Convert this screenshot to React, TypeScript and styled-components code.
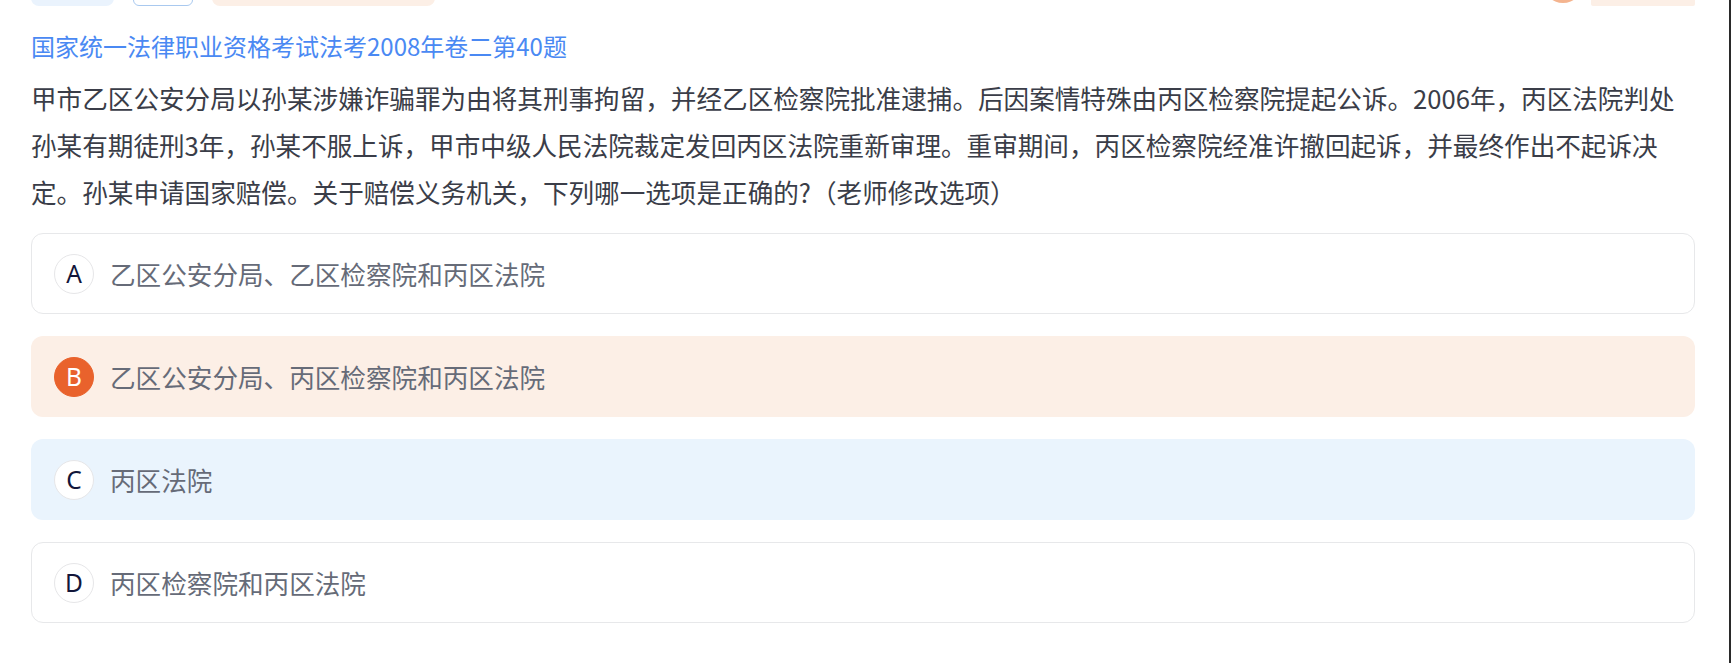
import React from "react";
import styled, { createGlobalStyle, css } from "styled-components";

const GlobalStyle = createGlobalStyle`
  html, body {
    margin: 0;
    padding: 0;
    background: #fff;
  }
  body {
    font-family: "Noto Sans CJK SC", "Noto Sans", "Liberation Sans", sans-serif;
    -webkit-font-smoothing: antialiased;
  }
`;

const Page = styled.div`
  display: flex;
  height: 663px;
  overflow: hidden;
`;

const Content = styled.div`
  flex: 1;
  min-width: 0;
  padding: 0 34px 0 31px;
`;

const WindowEdge = styled.div`
  width: 2px;
  background: #2a2a2a;
`;

/* the tag bar above is scrolled away, only its lower edge still shows */
const TagStrip = styled.div`
  display: flex;
  align-items: flex-end;
  height: 6px;
  overflow: hidden;
`;

const TagGroup = styled.div`
  display: flex;
  align-items: flex-end;
  gap: ${(p: { $gap: number }) => p.$gap}px;
`;

type TagKind = "blue" | "outline" | "peach" | "flat";

const tagStyles: Record<TagKind, ReturnType<typeof css>> = {
  blue: css`
    background: #eaf3fd;
    border-radius: 8px;
  `,
  outline: css`
    background: #fff;
    border: 1px solid #a9c9ef;
    border-radius: 6px;
  `,
  peach: css`
    background: #fcefe6;
    border-radius: 8px;
  `,
  flat: css`
    background: #fcefe6;
    border-radius: 2px;
  `,
};

const Tag = styled.div<{ $kind: TagKind; $width: number }>`
  box-sizing: border-box;
  height: 36px;
  width: ${(p) => p.$width}px;
  ${(p) => tagStyles[p.$kind]}
`;

const Avatar = styled.div`
  width: 40px;
  height: 40px;
  margin-bottom: 3px;
  border-radius: 50%;
  background: #f4b48f;
`;

const Spacer = styled.div`
  flex: 1;
`;

const Source = styled.div`
  margin: 22px 0 10px;
  font-size: 24px;
  line-height: 36px;
  color: #4a89f3;
`;

const Stem = styled.p`
  margin: 0;
  font-size: 25.6px;
  line-height: 47px;
  color: #3a3d48;
`;

const OptionList = styled.div`
  display: flex;
  flex-direction: column;
  gap: 22px;
  margin-top: 18px;
`;

type OptionState = "idle" | "chosen" | "hover";

const optionBg: Record<OptionState, string> = {
  idle: "#fff",
  chosen: "#fcefe6",
  hover: "#eaf4fd",
};

const OptionRow = styled.div<{ $state: OptionState }>`
  display: flex;
  align-items: center;
  gap: 16px;
  padding: 19.5px 22px;
  border: 1px solid ${(p) => (p.$state === "idle" ? "#e7e8ea" : "transparent")};
  border-radius: 12px;
  background: ${(p) => optionBg[p.$state]};
`;

const Letter = styled.span<{ $chosen: boolean }>`
  box-sizing: border-box;
  flex: none;
  display: flex;
  align-items: center;
  justify-content: center;
  width: 40px;
  height: 40px;
  border-radius: 50%;
  font-family: "Noto Sans", "Liberation Sans", sans-serif;
  font-size: 24.5px;
  ${(p) =>
    p.$chosen
      ? css`
          background: #e9622c;
          border: 1px solid #e9622c;
          color: #fff;
        `
      : css`
          background: #fff;
          border: 1px solid #e6e6e8;
          color: #12163a;
        `}
`;

const OptionText = styled.span`
  font-size: 25.6px;
  line-height: 40px;
  color: #666b78;
`;

type Option = { key: string; text: string; state: OptionState };

const options: Option[] = [
  { key: "A", text: "乙区公安分局、乙区检察院和丙区法院", state: "idle" },
  { key: "B", text: "乙区公安分局、丙区检察院和丙区法院", state: "chosen" },
  { key: "C", text: "丙区法院", state: "hover" },
  { key: "D", text: "丙区检察院和丙区法院", state: "idle" },
];

const stem =
  "甲市乙区公安分局以孙某涉嫌诈骗罪为由将其刑事拘留，并经乙区检察院批准逮捕。后因案情特殊由丙区检察院提起公诉。2006年，丙区法院判处孙某有期徒刑3年，孙某不服上诉，甲市中级人民法院裁定发回丙区法院重新审理。重审期间，丙区检察院经准许撤回起诉，并最终作出不起诉决定。孙某申请国家赔偿。关于赔偿义务机关，下列哪一选项是正确的?（老师修改选项）";

const App = () => (
  <Page>
    <GlobalStyle />
    <Content>
      <TagStrip>
        <TagGroup $gap={19}>
          <Tag $kind="blue" $width={83} />
          <Tag $kind="outline" $width={60} />
          <Tag $kind="peach" $width={223} />
        </TagGroup>
        <Spacer />
        <TagGroup $gap={8}>
          <Avatar />
          <Tag $kind="flat" $width={104} />
        </TagGroup>
      </TagStrip>
      <Source>国家统一法律职业资格考试法考2008年卷二第40题</Source>
      <Stem>{stem}</Stem>
      <OptionList>
        {options.map((o) => (
          <OptionRow key={o.key} $state={o.state}>
            <Letter $chosen={o.state === "chosen"}>{o.key}</Letter>
            <OptionText>{o.text}</OptionText>
          </OptionRow>
        ))}
      </OptionList>
    </Content>
    <WindowEdge />
  </Page>
);

export default App;
